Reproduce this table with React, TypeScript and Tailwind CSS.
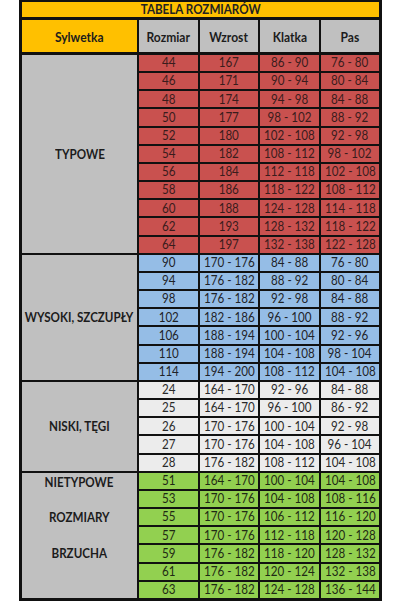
const FONT = "font-['Lato','Liberation_Sans',sans-serif]";

type Row = [string, string, string, string];

const GRUPY: {
  nazwa: string;
  span: string;
  cell: string;
  rows: Row[];
}[] = [
  {
    nazwa: 'TYPOWE',
    span: 'row-span-11',
    cell: 'bg-[#c9514f] text-[#3a1c1c]',
    rows: [
      ['44', '167', '86 - 90', '76 - 80'],
      ['46', '171', '90 - 94', '80 - 84'],
      ['48', '174', '94 - 98', '84 - 88'],
      ['50', '177', '98 - 102', '88 - 92'],
      ['52', '180', '102 - 108', '92 - 98'],
      ['54', '182', '108 - 112', '98 - 102'],
      ['56', '184', '112 - 118', '102 - 108'],
      ['58', '186', '118 - 122', '108 - 112'],
      ['60', '188', '124 - 128', '114 - 118'],
      ['62', '193', '128 - 132', '118 - 122'],
      ['64', '197', '132 - 138', '122 - 128'],
    ],
  },
  {
    nazwa: 'WYSOKI, SZCZUPŁY',
    span: 'row-span-7',
    cell: 'bg-[#95bde6] text-[#1f2328]',
    rows: [
      ['90', '170 - 176', '84 - 88', '76 - 80'],
      ['94', '176 - 182', '88 - 92', '80 - 84'],
      ['98', '176 - 182', '92 - 98', '84 - 88'],
      ['102', '182 - 186', '96 - 100', '88 - 92'],
      ['106', '188 - 194', '100 - 104', '92 - 96'],
      ['110', '188 - 194', '104 - 108', '98 - 104'],
      ['114', '194 - 200', '108 - 112', '104 - 108'],
    ],
  },
  {
    nazwa: 'NISKI, TĘGI',
    span: 'row-span-5',
    cell: 'bg-[#ececec] text-[#2a2a2a]',
    rows: [
      ['24', '164 - 170', '92 - 96', '84 - 88'],
      ['25', '164 - 170', '96 - 100', '86 - 92'],
      ['26', '170 - 176', '100 - 104', '92 - 98'],
      ['27', '170 - 176', '104 - 108', '96 - 104'],
      ['28', '176 - 182', '108 - 112', '104 - 108'],
    ],
  },
];

const NIETYPOWE: Row[] = [
  ['51', '164 - 170', '100 - 104', '104 - 108'],
  ['53', '170 - 176', '104 - 108', '108 - 116'],
  ['55', '170 - 176', '106 - 112', '116 - 120'],
  ['57', '170 - 176', '112 - 118', '120 - 128'],
  ['59', '176 - 182', '118 - 120', '128 - 132'],
  ['61', '176 - 182', '120 - 124', '132 - 138'],
  ['63', '176 - 182', '124 - 128', '136 - 144'],
];

// tekst zwężony jak Calibri w oryginale
function T({ children }: { children: React.ReactNode }) {
  return <span className="inline-block whitespace-nowrap scale-x-[0.86]">{children}</span>;
}

function Cells({ rows, cell }: { rows: Row[]; cell: string }) {
  return (
    <>
      {rows.flatMap((r, i) =>
        r.map((v, j) => (
          <div key={`${i}-${j}`} className={`${cell} flex items-center justify-center text-[13.5px] leading-none`}>
            <T>{v}</T>
          </div>
        ))
      )}
    </>
  );
}

export default function App() {
  return (
    <div className={`w-[401px] h-[601px] bg-white overflow-hidden ${FONT}`}>
      <div className="mx-auto w-[363px] bg-[#111] pt-[2px] px-[3px] pb-[3px] flex flex-col gap-[3px]">
        {/* tytuł */}
        <div className="h-[15px] bg-[#ffc000] flex items-center justify-center text-[13.5px] font-bold text-[#222] leading-none">
          <T>TABELA ROZMIARÓW</T>
        </div>

        {/* nagłówek */}
        <div className="grid grid-cols-[115px_59px_58px_59px_58px] gap-x-[2px] h-[32px] text-[14px] font-bold text-[#1c1c1c]">
          <div className="bg-[#ffc000] flex items-center justify-center"><T>Sylwetka</T></div>
          <div className="bg-[#c0c0c0] flex items-center justify-center"><T>Rozmiar</T></div>
          <div className="bg-[#c0c0c0] flex items-center justify-center"><T>Wzrost</T></div>
          <div className="bg-[#c0c0c0] flex items-center justify-center"><T>Klatka</T></div>
          <div className="bg-[#c0c0c0] flex items-center justify-center"><T>Pas</T></div>
        </div>

        {/* dane */}
        <div className="grid grid-cols-[115px_59px_58px_59px_58px] grid-rows-[repeat(30,minmax(0,1fr))] gap-[2px] h-[543px]">
          {GRUPY.map((g) => (
            <Fragment key={g.nazwa}>
              <div className={`${g.span} bg-[#c0c0c0] flex items-center justify-center text-[13.5px] font-bold text-[#1c1c1c]`}>
                <T>{g.nazwa}</T>
              </div>
              <Cells rows={g.rows} cell={g.cell} />
            </Fragment>
          ))}
          <div className="row-span-7 bg-[#c0c0c0] grid grid-rows-[repeat(7,minmax(0,1fr))] text-[13.5px] font-bold text-[#1c1c1c]">
            <div className="flex items-center justify-center"><T>NIETYPOWE</T></div>
            <div />
            <div className="flex items-center justify-center"><T>ROZMIARY</T></div>
            <div />
            <div className="flex items-center justify-center"><T>BRZUCHA</T></div>
          </div>
          <Cells rows={NIETYPOWE} cell="bg-[#92d050] text-[#1f2a14]" />
        </div>
      </div>
    </div>
  );
}

import { Fragment } from 'react';
